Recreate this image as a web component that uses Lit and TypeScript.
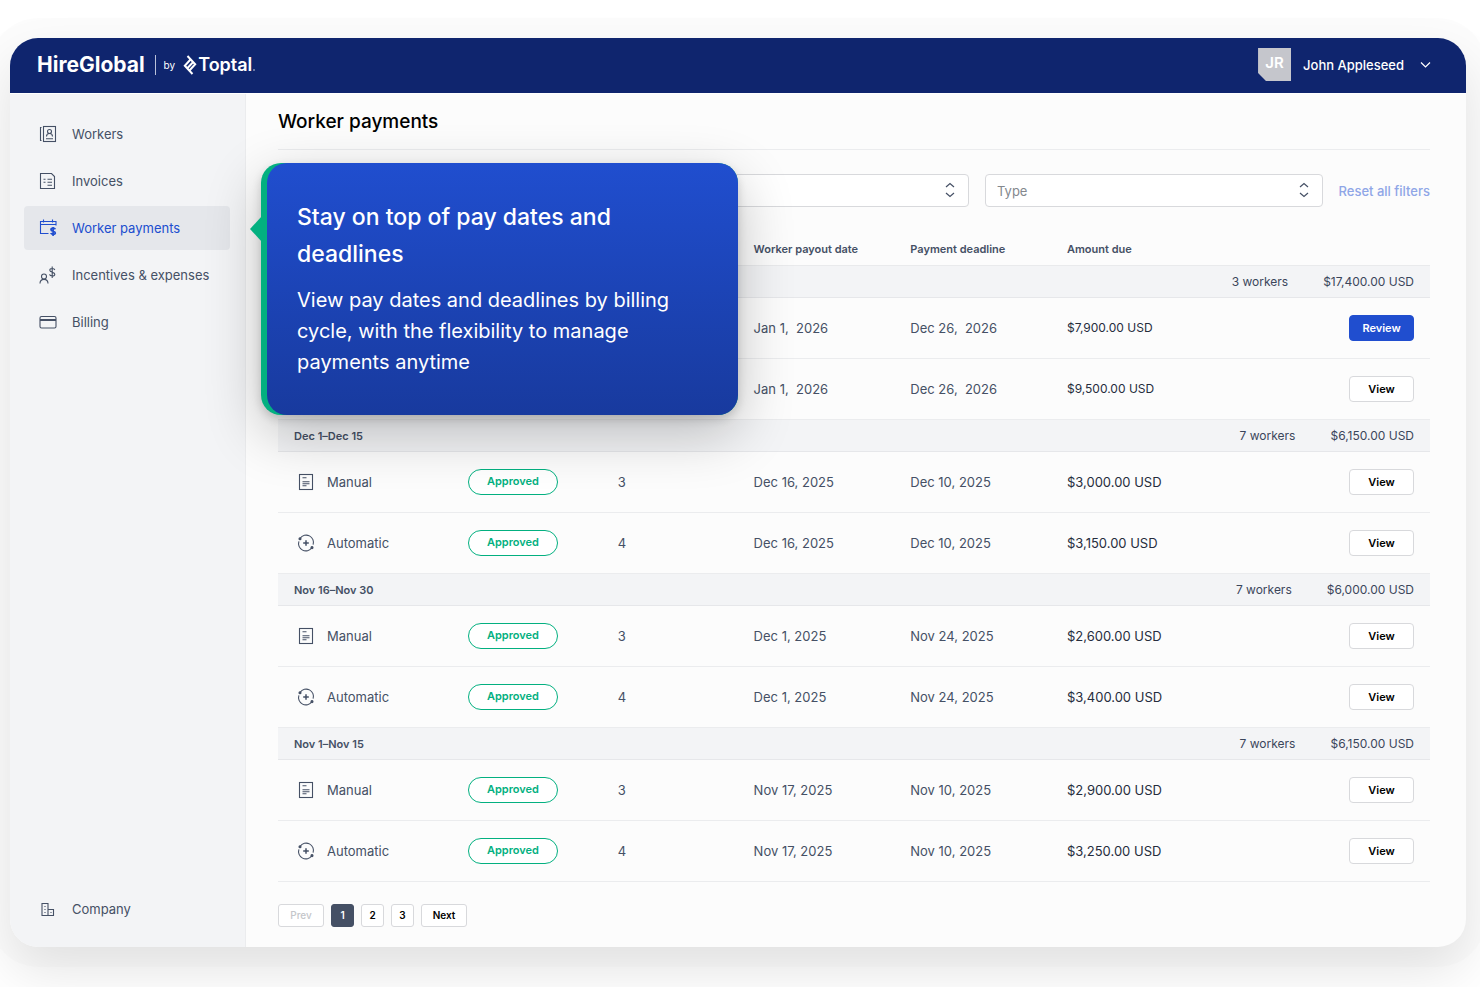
import { LitElement, html, css, svg } from "lit";
import { customElement, property } from "lit/decorators.js";
import { classMap } from "lit/directives/class-map.js";

interface Payment {
  kind: string;
  status: string;
  workers: string;
  payout: string;
  deadline: string;
  amount: string;
  action: string;
}

interface Cycle {
  label: string;
  workers: string;
  total: string;
  payments: Payment[];
}

const approved = (
  kind: string,
  workers: string,
  payout: string,
  deadline: string,
  amount: string
): Payment => ({ kind, status: "Approved", workers, payout, deadline, amount, action: "View" });

const upcoming = (amount: string, action: string): Payment => ({
  kind: "",
  status: "",
  workers: "",
  payout: "Jan 1,  2026",
  deadline: "Dec 26,  2026",
  amount,
  action,
});

const CYCLES: Cycle[] = [
  {
    label: "",
    workers: "3 workers",
    total: "$17,400.00 USD",
    payments: [upcoming("$7,900.00 USD", "Review"), upcoming("$9,500.00 USD", "View")],
  },
  {
    label: "Dec 1–Dec 15",
    workers: "7 workers",
    total: "$6,150.00 USD",
    payments: [
      approved("Manual", "3", "Dec 16, 2025", "Dec 10, 2025", "$3,000.00 USD"),
      approved("Automatic", "4", "Dec 16, 2025", "Dec 10, 2025", "$3,150.00 USD"),
    ],
  },
  {
    label: "Nov 16–Nov 30",
    workers: "7 workers",
    total: "$6,000.00 USD",
    payments: [
      approved("Manual", "3", "Dec 1, 2025", "Nov 24, 2025", "$2,600.00 USD"),
      approved("Automatic", "4", "Dec 1, 2025", "Nov 24, 2025", "$3,400.00 USD"),
    ],
  },
  {
    label: "Nov 1–Nov 15",
    workers: "7 workers",
    total: "$6,150.00 USD",
    payments: [
      approved("Manual", "3", "Nov 17, 2025", "Nov 10, 2025", "$2,900.00 USD"),
      approved("Automatic", "4", "Nov 17, 2025", "Nov 10, 2025", "$3,250.00 USD"),
    ],
  },
];

const NAV = ["Workers", "Invoices", "Worker payments", "Incentives & expenses", "Billing"];

// Line icons, all drawn on an 18x18 grid
const ICONS: Record<string, unknown> = {
  Workers: svg`
    <rect x="4.5" y="1.5" width="12" height="15" />
    <path d="M2.5 2.5h-1v13h1" />
    <circle cx="10.5" cy="6.5" r="2" />
    <path d="M7.5 11.5c0-4 6-4 6 0M7 13.7h7" />`,
  Invoices: svg`
    <path d="M1.5 1.5h11l3 3v12h-14z" />
    <path d="M4.500 7.200h2M8.500 7.200h4.500M4.500 10.200h2M8.500 10.200h4.500M8.500 13.200h4.500" />`,
  "Worker payments": svg`
    <path d="M9.500 14.500h-8v-12h15.500v4M1.500 5.500h15.500M4.500 .5v3M13.500 .5v3" />
    <path d="M16.300 10.200c-.5-1.300-4.300-1.500-4.300.5 0 1.900 4.300 1.300 4.300 3.200 0 2-4 1.700-4.500.2M14.100 8v9" stroke-width="1.700" />`,
  "Incentives & expenses": svg`
    <circle cx="5" cy="10.500" r="2.500" />
    <path d="M1 17.500c0-5.500 8-5.500 8 0" />
    <path d="M15.800 4c-.5-1.900-5-2-5 .3 0 2.400 5 1.500 5 3.900 0 2.400-4.800 2.200-5.300.2M13.200.5v11.500" />`,
  Billing: svg`
    <rect x="1" y="3.500" width="16" height="11.500" rx="1.500" />
    <path d="M1 7h16" stroke-width="2" />`,
  Company: svg`
    <path d="M3 15.500v-12h6v12zM9 9.500h5.500v6h-12" />
    <path d="M6 6v1M6 9v1M6 12v1M12 12v1" />`,
  Manual: svg`
    <rect x="2.500" y="1.500" width="13" height="15" />
    <path d="M5.500 4.700h4M5.500 8.700h7M5.500 10.700h7M5.500 12.700h4" />`,
  Automatic: svg`
    <path d="M3.200 4.200a7.300 7.300 0 0 1 12.900 6.500M14.800 13.800a7.300 7.300 0 0 1-12.900-6.500" />
    <path d="M9 6.200v5.600M6.200 9h5.600" stroke-width="1.500" />
    <circle cx="3" cy="4.700" r="1" class="dot" />
    <circle cx="15" cy="13.600" r="1" class="dot" />`,
};

@customElement("line-icon")
export class LineIcon extends LitElement {
  @property() name = "";

  static styles = css`
    :host {
      display: block;
      flex: none;
      width: 18px;
      height: 18px;
    }
    .icon {
      display: block;
      fill: none;
      stroke: currentColor;
      stroke-width: 1.1;
    }
    .dot {
      fill: currentColor;
    }
  `;

  render() {
    return html`<svg class="icon" width="18" height="18" viewBox="0 0 18 18" aria-hidden="true">
      ${ICONS[this.name]}
    </svg>`;
  }
}

@customElement("filter-select")
export class FilterSelect extends LitElement {
  @property() label = "";
  @property() placeholder = "";

  static styles = css`
    :host {
      display: block;
      flex: 1;
      position: relative;
    }
    .select {
      display: block;
      width: 100%;
      height: 33px;
      box-sizing: border-box;
      padding: 0 36px 0 11px;
      border: 1px solid #d8d9dc;
      border-radius: 4px;
      background: #ffffff;
      color: #84888e;
      font: 400 13px Inter, sans-serif;
      appearance: none;
    }
    .arrows {
      position: absolute;
      top: 8px;
      right: 14px;
      fill: none;
      stroke: #455065;
      stroke-width: 1.2;
      pointer-events: none;
    }
  `;

  render() {
    return html`
      <select class="select" aria-label=${this.label}>
        <option>${this.placeholder}</option>
      </select>
      <svg class="arrows" width="10" height="16" viewBox="0 0 10 16" aria-hidden="true">
        <path d="M1 5l4-3.500 4 3.500M1 11l4 3.500 4-3.500" />
      </svg>
    `;
  }
}

@customElement("payments-table")
export class PaymentsTable extends LitElement {
  @property({ attribute: false }) cycles: Cycle[] = [];

  static styles = css`
    :host {
      display: block;
    }
    .table {
      width: 100%;
      table-layout: fixed;
      border-collapse: separate;
      border-spacing: 0;
      font-size: 13px;
      line-height: 18px;
      color: #455065;
      text-align: left;
    }
    .col-kind {
      width: 15.1%;
    }
    .col-status {
      width: 13%;
    }
    .col-workers {
      width: 11.8%;
    }
    .col-date {
      width: 13.6%;
    }
    .head {
      height: 33px;
      padding: 0 16px;
      font-size: 11px;
      font-weight: 600;
      border-bottom: 1px solid #e9eaec;
    }
    .cell {
      height: 60px;
      padding: 0 16px;
      border-bottom: 1px solid #ebecee;
      white-space: pre;
    }
    .group {
      height: 31px;
      padding: 0 16px;
      background: #f3f4f6;
      border-bottom: 1px solid #e6e7ea;
      font-size: 12px;
      font-weight: 400;
    }
    .group.label {
      font-size: 11px;
      font-weight: 600;
    }
    .totals {
      display: flex;
      justify-content: flex-end;
      gap: 35px;
      color: #3b465b;
    }
    .kind {
      display: flex;
      align-items: center;
      gap: 12px;
      padding-left: 3px;
    }
    .badge {
      display: inline-block;
      width: 90px;
      height: 26px;
      box-sizing: border-box;
      border: 1px solid #03b080;
      border-radius: 13px;
      background: #ffffff;
      color: #03b080;
      font-size: 11px;
      font-weight: 600;
      line-height: 22px;
      text-align: center;
    }
    .amount {
      color: #262d3d;
    }
    .amount.small {
      font-size: 12px;
    }
    .action {
      text-align: right;
    }
    .button {
      width: 65px;
      height: 26px;
      padding: 0 0 1px;
      border: 1px solid #d8d9dc;
      border-radius: 4px;
      background: #ffffff;
      color: #000000;
      font: 600 11px Inter, sans-serif;
    }
    .button.primary {
      border-color: #204ecf;
      background: #204ecf;
      color: #ffffff;
    }
  `;

  _renderPayment(p: Payment) {
    return html`
      <tr>
        <td class="cell">${p.kind
          ? html`<div class="kind"><line-icon name=${p.kind}></line-icon><span>${p.kind}</span></div>`
          : ""}</td>
        <td class="cell">${p.status ? html`<span class="badge">${p.status}</span>` : ""}</td>
        <td class="cell">${p.workers}</td>
        <td class="cell">${p.payout}</td>
        <td class="cell">${p.deadline}</td>
        <td class=${classMap({ cell: true, amount: true, small: !p.status })}>${p.amount}</td>
        <td class="cell action"><button
            type="button"
            class=${classMap({ button: true, primary: p.action === "Review" })}
          >${p.action}</button></td>
      </tr>
    `;
  }

  render() {
    return html`
      <table class="table">
        <colgroup>
          <col class="col-kind" />
          <col class="col-status" />
          <col class="col-workers" />
          <col class="col-date" />
          <col class="col-date" />
          <col />
          <col />
        </colgroup>
        <thead>
          <tr>
            <td class="head" colspan="3"></td>
            <th class="head" scope="col">Worker payout date</th>
            <th class="head" scope="col">Payment deadline</th>
            <th class="head" scope="col">Amount due</th>
            <td class="head"></td>
          </tr>
        </thead>
        ${this.cycles.map(
          (c) => html`
            <tbody>
              <tr>
                <th class="group label" scope="rowgroup" colspan="3">${c.label}</th>
                <td class="group" colspan="4">
                  <div class="totals"><span>${c.workers}</span><span>${c.total}</span></div>
                </td>
              </tr>
              ${c.payments.map((p) => this._renderPayment(p))}
            </tbody>
          `
        )}
      </table>
    `;
  }
}

@customElement("app-root")
export class AppRoot extends LitElement {
  static styles = css`
    :host {
      display: flex;
      min-height: 100vh;
      box-sizing: border-box;
      padding: 38px 14px 40px 10px;
      overflow: hidden;
      background: #ffffff;
      font-family: Inter, sans-serif;
      font-size: 13px;
      color: #455065;
    }
    .window {
      flex: 1;
      display: flex;
      flex-direction: column;
      border-radius: 28px;
      background: #fcfcfc;
      box-shadow:
        0 0 0 20px rgba(0, 0, 0, 0.012),
        0 24px 52px rgba(0, 0, 0, 0.11);
    }
    .topbar {
      display: flex;
      align-items: center;
      justify-content: space-between;
      height: 53px;
      padding: 0 35px 2px 27px;
      border-bottom: 1px solid #ffffff;
      border-radius: 28px 28px 0 0;
      background: #0f256e;
      background-clip: padding-box;
      color: #ffffff;
    }
    .brand,
    .toptal,
    .account {
      display: flex;
      align-items: center;
    }
    .product {
      font-size: 21px;
      font-weight: 700;
    }
    .by {
      margin-left: 10px;
      padding: 0 8px;
      border-left: 1px solid #b9c1da;
      font-size: 10px;
      line-height: 20px;
    }
    .toptal {
      gap: 1px;
      font-size: 18px;
      font-weight: 600;
    }
    .account {
      gap: 12px;
      padding: 0;
      border: 0;
      background: none;
      color: #ffffff;
      font: 500 13px Inter, sans-serif;
    }
    .avatar {
      width: 33px;
      height: 33px;
      background: #c5c6cc;
      clip-path: polygon(0 0, 100% 0, 100% 100%, 24% 100%, 0 76%);
      font-size: 15px;
      font-weight: 600;
      line-height: 29px;
      text-align: center;
    }
    .chevron {
      margin-left: 4px;
      fill: none;
      stroke: #ffffff;
      stroke-width: 1.2;
    }
    .body {
      flex: 1;
      display: flex;
    }
    .sidebar {
      display: flex;
      flex-direction: column;
      gap: 3px;
      width: 236px;
      box-sizing: border-box;
      padding: 18px 15px 16px 14px;
      border-right: 1px solid #ebecee;
      border-radius: 0 0 0 28px;
      background: #f3f4f6;
    }
    .link {
      display: flex;
      align-items: center;
      gap: 15px;
      height: 44px;
      padding: 0 15px;
      border-radius: 4px;
      color: #455065;
      text-decoration: none;
      white-space: nowrap;
    }
    .link.active {
      background: #e5e7eb;
      color: #204ecf;
    }
    .company {
      margin-top: auto;
    }
    .main {
      flex: 1;
      position: relative;
      padding: 13px 36px 19px 32px;
    }
    .title {
      margin: 0;
      padding-bottom: 12px;
      border-bottom: 1px solid #ebecee;
      color: #000000;
      font-size: 19px;
      font-weight: 500;
      line-height: 30px;
    }
    .filters {
      display: flex;
      align-items: center;
      gap: 16px;
      padding: 24px 0 25px;
    }
    .reset {
      color: #8fa6e7;
      font-weight: 500;
      text-decoration: none;
    }
    .pager {
      display: flex;
      gap: 7px;
      padding-top: 22px;
    }
    .page {
      min-width: 23px;
      height: 23px;
      padding: 0 0 1px;
      border: 1px solid #d8d9dc;
      border-radius: 3px;
      background: #ffffff;
      color: #000000;
      font: 600 10px Inter, sans-serif;
    }
    .page.wide {
      min-width: 46px;
    }
    .page.current {
      border-color: #455065;
      background: #455065;
      color: #ffffff;
    }
    .page:disabled {
      color: #c4c6ca;
      font-weight: 500;
    }
    .callout {
      position: absolute;
      top: 69px;
      left: 15px;
      width: 477px;
      box-sizing: border-box;
      padding-left: 6px;
      border-radius: 20px;
      background: #03b080;
      box-shadow:
        0 4px 10px rgba(0, 0, 0, 0.16),
        0 18px 56px rgba(0, 0, 0, 0.24);
    }
    .callout::before {
      content: "";
      position: absolute;
      top: 53px;
      left: -11px;
      width: 12px;
      height: 26px;
      background: #03b080;
      clip-path: polygon(0 50%, 100% 0, 100% 100%);
    }
    .bubble {
      padding: 36px 30px 37px;
      border-radius: 20px;
      background: linear-gradient(#204ecf, #183a9e);
      color: #ffffff;
    }
    .lead {
      margin: 0 0 12px;
      font-size: 23px;
      font-weight: 500;
      line-height: 37px;
    }
    .text {
      margin: 0;
      font-size: 20px;
      line-height: 31px;
    }
  `;

  _renderLink(name: string, extra = "") {
    const active = name === "Worker payments";
    return html`
      <a
        href="#"
        class=${classMap({ link: true, active, company: extra === "company" })}
        aria-current=${active ? "page" : "false"}
      >
        <line-icon name=${name}></line-icon>
        <span>${name}</span>
      </a>
    `;
  }

  render() {
    return html`
      <div class="window">
        <header class="topbar">
          <div class="brand">
            <span class="product">HireGlobal</span>
            <span class="by">by</span>
            <span class="toptal">
              <svg width="14" height="20" viewBox="0 0 14 20" aria-hidden="true">
                <path
                  d="M4.500 1l7.700 8.300L6 16M9.500 19L1.800 10.700 7.500 4.500M4.800 12.800l4.700-5"
                  fill="none"
                  stroke="#ffffff"
                  stroke-width="2"
                />
              </svg>
              <span>Toptal</span>
              <svg width="2" height="12" viewBox="0 0 2 12" aria-hidden="true">
                <circle cx="1" cy="11" r="1" fill="#8792b7" />
              </svg>
            </span>
          </div>
          <button type="button" class="account">
            <span class="avatar">JR</span>
            <span>John Appleseed</span>
            <svg class="chevron" width="11" height="8" viewBox="0 0 11 8" aria-hidden="true">
              <path d="M1 1.500l4.500 4.500L10 1.500" />
            </svg>
          </button>
        </header>
        <div class="body">
          <nav class="sidebar">
            ${NAV.map((name) => this._renderLink(name))} ${this._renderLink("Company", "company")}
          </nav>
          <main class="main">
            <h1 class="title">Worker payments</h1>
            <div class="filters">
              <filter-select label="Billing cycle"></filter-select>
              <filter-select label="Status"></filter-select>
              <filter-select label="Type" placeholder="Type"></filter-select>
              <a class="reset" href="#">Reset all filters</a>
            </div>
            <payments-table .cycles=${CYCLES}></payments-table>
            <div class="pager">
              <button type="button" class="page wide" disabled>Prev</button>
              <button type="button" class="page current">1</button>
              <button type="button" class="page">2</button>
              <button type="button" class="page">3</button>
              <button type="button" class="page wide">Next</button>
            </div>
            <aside class="callout">
              <div class="bubble">
                <h2 class="lead">Stay on top of pay dates and deadlines</h2>
                <p class="text">
                  View pay dates and deadlines by billing cycle, with the flexibility to manage
                  payments anytime
                </p>
              </div>
            </aside>
          </main>
        </div>
      </div>
    `;
  }
}
